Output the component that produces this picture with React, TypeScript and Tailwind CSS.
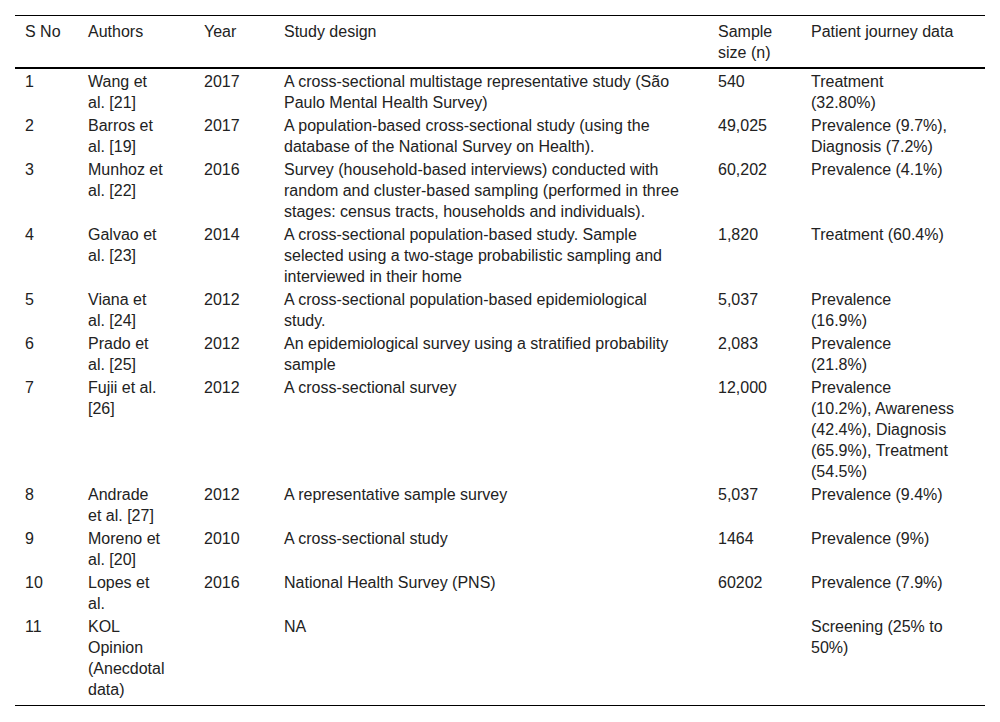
import React from "react";

type Row = [string, string[], string, string[], string, string[]];

const rows: Row[] = [
  ["1", ["Wang et", "al. [21]"], "2017", ["A cross-sectional multistage representative study (São", "Paulo Mental Health Survey)"], "540", ["Treatment", "(32.80%)"]],
  ["2", ["Barros et", "al. [19]"], "2017", ["A population-based cross-sectional study (using the", "database of the National Survey on Health)."], "49,025", ["Prevalence (9.7%),", "Diagnosis (7.2%)"]],
  ["3", ["Munhoz et", "al. [22]"], "2016", ["Survey (household-based interviews) conducted with", "random and cluster-based sampling (performed in three", "stages: census tracts, households and individuals)."], "60,202", ["Prevalence (4.1%)"]],
  ["4", ["Galvao et", "al. [23]"], "2014", ["A cross-sectional population-based study. Sample", "selected using a two-stage probabilistic sampling and", "interviewed in their home"], "1,820", ["Treatment (60.4%)"]],
  ["5", ["Viana et", "al. [24]"], "2012", ["A cross-sectional population-based epidemiological", "study."], "5,037", ["Prevalence", "(16.9%)"]],
  ["6", ["Prado et", "al. [25]"], "2012", ["An epidemiological survey using a stratified probability", "sample"], "2,083", ["Prevalence", "(21.8%)"]],
  ["7", ["Fujii et al.", "[26]"], "2012", ["A cross-sectional survey"], "12,000", ["Prevalence", "(10.2%), Awareness", "(42.4%), Diagnosis", "(65.9%), Treatment", "(54.5%)"]],
  ["8", ["Andrade", "et al. [27]"], "2012", ["A representative sample survey"], "5,037", ["Prevalence (9.4%)"]],
  ["9", ["Moreno et", "al. [20]"], "2010", ["A cross-sectional study"], "1464", ["Prevalence (9%)"]],
  ["10", ["Lopes et", "al."], "2016", ["National Health Survey (PNS)"], "60202", ["Prevalence (7.9%)"]],
  ["11", ["KOL", "Opinion", "(Anecdotal", "data)"], "", ["NA"], "", ["Screening (25% to", "50%)"]],
];

const grid = "grid grid-cols-[73px_116px_80px_434px_93px_174px]";

function Lines({ lines }: { lines: string[] }) {
  return (
    <div>
      {lines.map((l, i) => (
        <div key={i} className="whitespace-nowrap">
          {l}
        </div>
      ))}
    </div>
  );
}

export default function App() {
  return (
    <div
      className="w-[1000px] h-[722px] bg-white px-[15px] pt-[15px] text-[16px] leading-[21px] text-[#222]"
      style={{ fontFamily: '"Liberation Sans", Arial, sans-serif' }}
    >
      <div className="w-[970px] border-b border-black">
        <div className={`${grid} border-t border-black border-b-2 pt-[5px] pb-[5px] h-[54px]`}>
          <div className="pl-[10px]">S No</div>
          <div>Authors</div>
          <div>Year</div>
          <div>Study design</div>
          <Lines lines={["Sample", "size (n)"]} />
          <div>Patient journey data</div>
        </div>
        {rows.map((r, i) => (
          <div
            key={i}
            className={`${grid} pt-[2px] ${i === rows.length - 1 ? "pb-[5px]" : "pb-0"}`}
          >
            <div className="pl-[10px]">{r[0]}</div>
            <Lines lines={r[1]} />
            <div>{r[2]}</div>
            <Lines lines={r[3]} />
            <div>{r[4]}</div>
            <Lines lines={r[5]} />
          </div>
        ))}
      </div>
    </div>
  );
}
